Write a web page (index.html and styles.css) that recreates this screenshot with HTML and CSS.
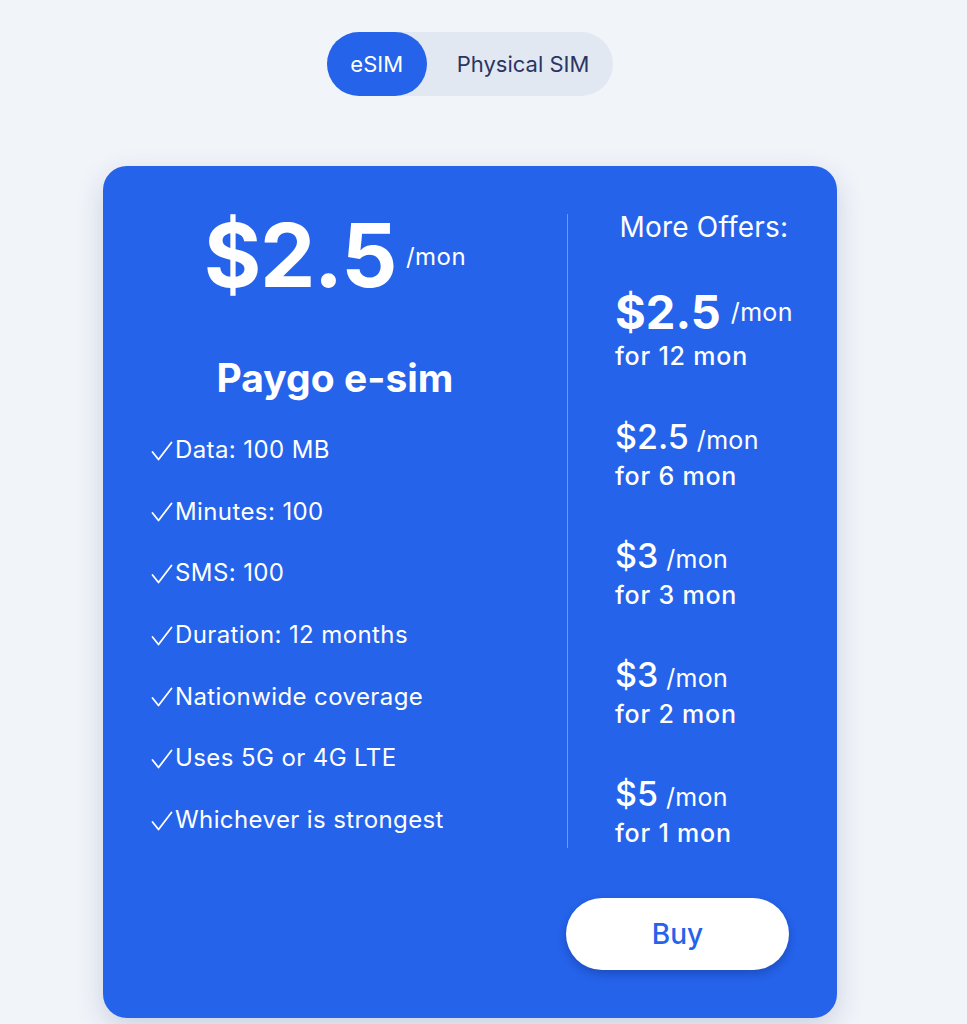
FILE: index.html
```html
<!DOCTYPE html>
<html lang="en">
<head>
<meta charset="utf-8">
<title>Paygo e-sim</title>
<link rel="stylesheet" href="styles.css">
</head>
<body>
<div class="page">
  <div class="toggle-wrap">
    <div class="toggle">
      <button class="toggle-btn active">eSIM</button>
      <button class="toggle-btn">Physical SIM</button>
    </div>
  </div>

  <div class="card">
    <div class="card-grid">
      <div class="plan">
        <div class="price-row">
          <span class="price">$2.5</span>
          <span class="per">/mon</span>
        </div>
        <h2 class="plan-name">Paygo e-sim</h2>
        <ul class="features">
          <li><svg class="check" viewBox="0 0 22 20" width="22" height="20"><path d="M1.5 11 L7.5 18.5 L20.5 1.5"/></svg>Data: 100 MB</li>
          <li><svg class="check" viewBox="0 0 22 20" width="22" height="20"><path d="M1.5 11 L7.5 18.5 L20.5 1.5"/></svg>Minutes: 100</li>
          <li><svg class="check" viewBox="0 0 22 20" width="22" height="20"><path d="M1.5 11 L7.5 18.5 L20.5 1.5"/></svg>SMS: 100</li>
          <li><svg class="check" viewBox="0 0 22 20" width="22" height="20"><path d="M1.5 11 L7.5 18.5 L20.5 1.5"/></svg>Duration: 12 months</li>
          <li><svg class="check" viewBox="0 0 22 20" width="22" height="20"><path d="M1.5 11 L7.5 18.5 L20.5 1.5"/></svg>Nationwide coverage</li>
          <li><svg class="check" viewBox="0 0 22 20" width="22" height="20"><path d="M1.5 11 L7.5 18.5 L20.5 1.5"/></svg>Uses 5G or 4G LTE</li>
          <li><svg class="check" viewBox="0 0 22 20" width="22" height="20"><path d="M1.5 11 L7.5 18.5 L20.5 1.5"/></svg>Whichever is strongest</li>
        </ul>
      </div>

      <div class="offers">
        <div class="offers-title">More Offers:</div>
        <div class="offer offer-featured">
          <div class="offer-price"><span class="offer-amount">$2.5</span><span class="offer-per">/mon</span></div>
          <div class="offer-term">for 12 mon</div>
        </div>
        <div class="offer">
          <div class="offer-price"><span class="offer-amount">$2.5</span><span class="offer-per">/mon</span></div>
          <div class="offer-term">for 6 mon</div>
        </div>
        <div class="offer">
          <div class="offer-price"><span class="offer-amount">$3</span><span class="offer-per">/mon</span></div>
          <div class="offer-term">for 3 mon</div>
        </div>
        <div class="offer">
          <div class="offer-price"><span class="offer-amount">$3</span><span class="offer-per">/mon</span></div>
          <div class="offer-term">for 2 mon</div>
        </div>
        <div class="offer">
          <div class="offer-price"><span class="offer-amount">$5</span><span class="offer-per">/mon</span></div>
          <div class="offer-term">for 1 mon</div>
        </div>
      </div>
    </div>

    <div class="actions">
      <button class="buy">Buy</button>
    </div>
  </div>
</div>
</body>
</html>
```

FILE: styles.css
```css
* {
  box-sizing: border-box;
}

html, body {
  margin: 0;
  padding: 0;
}

body {
  background: #f1f4f9;
  font-family: Inter, "Noto Sans", "Liberation Sans", sans-serif;
  color: #ffffff;
}

.page {
  width: 734px;
  margin-left: 103px;
  padding-top: 32px;
  padding-bottom: 40px;
}

.toggle-wrap {
  display: flex;
  justify-content: center;
}

.toggle {
  display: flex;
  background: #e2e8f2;
  border-radius: 32px;
  height: 64px;
}

.toggle-btn {
  border: none;
  background: transparent;
  font-family: inherit;
  font-size: 22px;
  font-weight: 400;
  color: #2b3562;
  border-radius: 32px;
  height: 64px;
  padding: 0 24px 0 30px;
  cursor: pointer;
}

.toggle-btn.active {
  background: #2563eb;
  color: #ffffff;
  width: 100px;
  padding: 0;
}

.card {
  margin-top: 70px;
  background: #2563eb;
  border-radius: 24px;
  padding: 48px;
  box-shadow: 0 10px 28px rgba(40, 55, 110, 0.18);
}

.card-grid {
  display: grid;
  grid-template-columns: 368px 1fr;
  column-gap: 48px;
}

.plan {
  display: flex;
  flex-direction: column;
}

.price-row {
  display: flex;
  justify-content: center;
  align-items: flex-start;
  gap: 10px;
}

.price {
  font-size: 88px;
  font-weight: 700;
  line-height: 88px;
  margin-top: -3px;
  letter-spacing: -1.5px;
}

.per {
  font-size: 24px;
  line-height: 29px;
  margin-top: 28px;
  letter-spacing: 0.5px;
}

.plan-name {
  margin: 57px 0 0;
  text-align: center;
  font-size: 39px;
  font-weight: 700;
  line-height: 43px;
}

.features {
  list-style: none;
  margin: 33px 0 0;
  padding: 0;
  display: flex;
  flex-direction: column;
  gap: 25.7px;
}

.features li {
  display: flex;
  align-items: center;
  font-size: 24px;
  line-height: 36px;
  font-weight: 400;
  letter-spacing: 0.4px;
}

.check {
  flex: none;
  margin-right: 2px;
  margin-top: 1px;
  fill: none;
  stroke: #ffffff;
  stroke-width: 1.8;
  stroke-linecap: round;
  stroke-linejoin: round;
}

.offers {
  border-left: 1.5px solid rgba(255, 255, 255, 0.35);
  padding-left: 47px;
  display: flex;
  flex-direction: column;
}

.offers-title {
  text-align: center;
  font-size: 28px;
  line-height: 26px;
  font-weight: 400;
  letter-spacing: 0.2px;
  margin-left: -47px;
  padding-left: 47px;
  margin-bottom: 48px;
}

.offer {
  margin-bottom: 44px;
}

.offer:last-child {
  margin-bottom: 0;
}

.offer-price {
  display: flex;
  align-items: baseline;
  gap: 8px;
  height: 41px;
  line-height: 41px;
}

.offer-amount {
  font-size: 34px;
  font-weight: 500;
}

.offer-per {
  font-size: 25px;
  font-weight: 400;
  letter-spacing: 0.3px;
}

.offer-term {
  margin-top: 4px;
  font-size: 25px;
  line-height: 30px;
  font-weight: 500;
  letter-spacing: 0.8px;
}

.offer-featured {
  margin-bottom: 45px;
}

.offer-featured .offer-term {
  margin-top: 5px;
}

.offer-featured .offer-price {
  align-items: center;
  gap: 10px;
  height: 48px;
  line-height: 48px;
}

.offer-featured .offer-amount {
  font-size: 47px;
  font-weight: 700;
}

.offer-featured .offer-per {
  line-height: 30px;
}

.actions {
  display: flex;
  justify-content: flex-end;
  margin-top: 50px;
}

.buy {
  width: 223px;
  height: 72px;
  border: none;
  border-radius: 36px;
  background: #ffffff;
  color: #2563eb;
  font-family: inherit;
  font-size: 28px;
  font-weight: 500;
  box-shadow: 0 4px 8px rgba(10, 30, 90, 0.3);
  cursor: pointer;
}
```
